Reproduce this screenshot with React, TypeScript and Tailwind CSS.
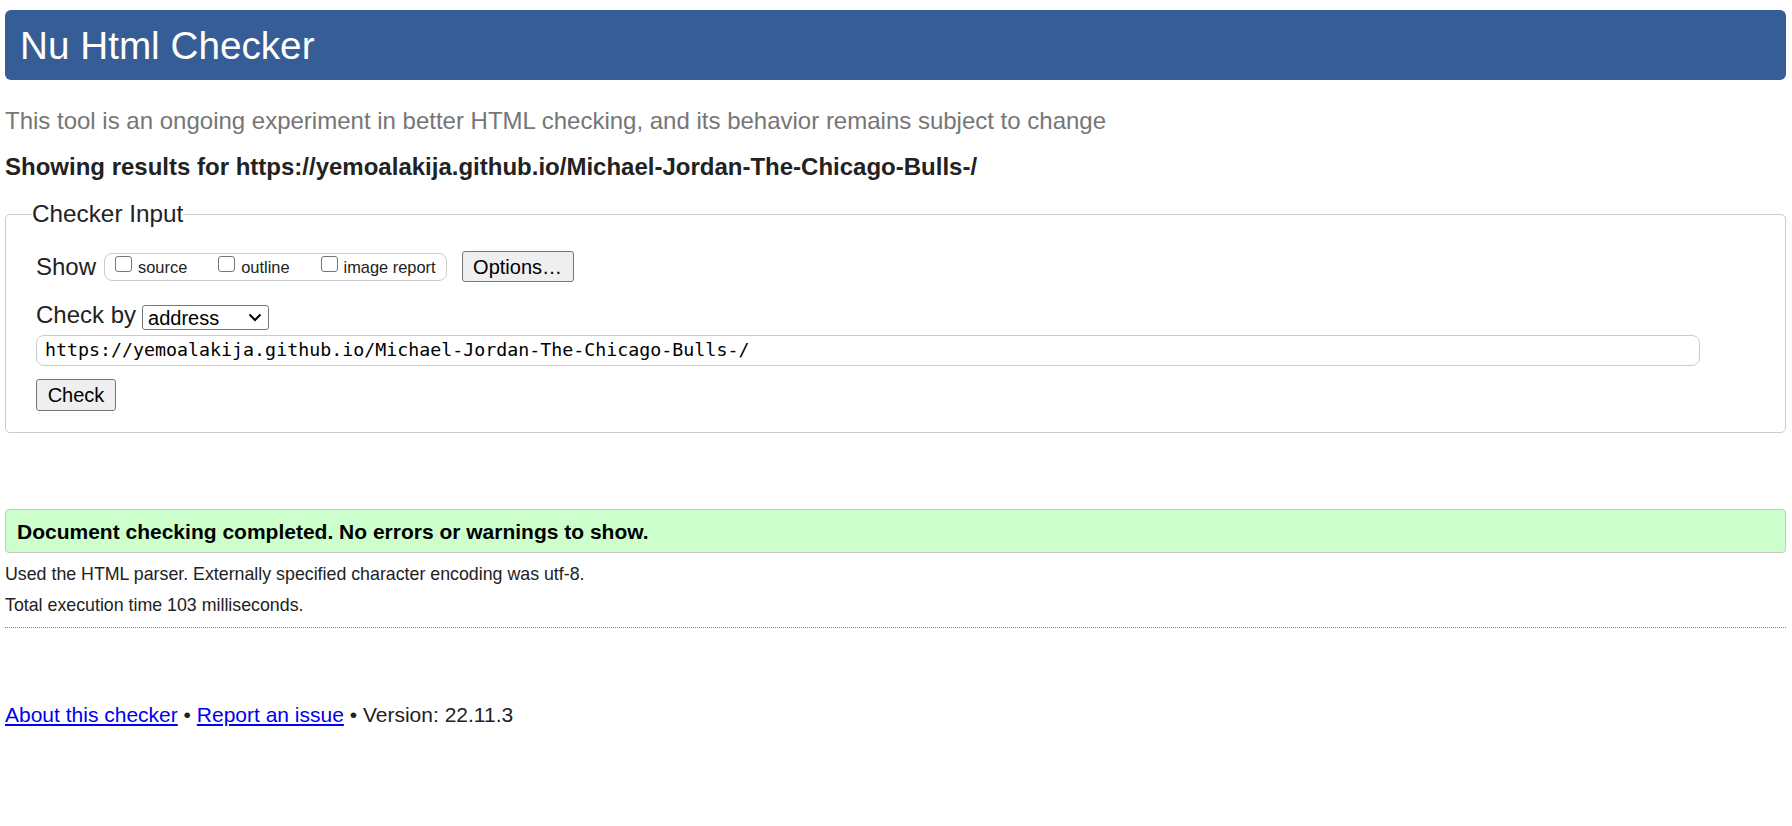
import React from 'react';

const url = 'https://yemoalakija.github.io/Michael-Jordan-The-Chicago-Bulls-/';

// one checkbox + its small label inside the "Show" group
const ShowOption = ({ id, label }: { id: string; label: string }) => (
  <label htmlFor={id} className="flex items-center">
    <input
      id={id}
      type="checkbox"
      className="mb-[5px] h-[16px] w-[17px] appearance-none rounded-[3px] border border-[#767676] bg-white"
    />
    <span className="ml-[6px] mt-[1px] text-[16.4px] leading-none">{label}</span>
  </label>
);

const App: React.FC = () => {
  return (
    <div className="min-h-screen bg-white pl-[5px] pr-[6px] pt-[10px] font-['Liberation_Sans',Arial,sans-serif] text-[#222]">
      <header className="flex h-[70px] items-center rounded-[6px] bg-[#365d95] pl-[15px] pt-[2px]">
        <h1 className="text-[38.7px] leading-none text-white">Nu Html Checker</h1>
      </header>

      <p className="mt-[27px] text-[24px] leading-[28px] text-[#767676]">
        This tool is an ongoing experiment in better HTML checking, and its behavior remains subject to change
      </p>
      <h2 className="mt-[18px] text-[24px] font-bold leading-[28px]">Showing results for {url}</h2>

      <fieldset className="mt-[19px] rounded-[5px] border border-[#ccc] pb-[21px] pl-[30px] pt-[23px]">
        <legend className="-ml-[4px] text-[24.3px] leading-[28px]">Checker Input</legend>

        {/* Show row */}
        <div className="flex h-[31px] items-center">
          <span className="text-[24px] leading-none">Show</span>
          <div className="ml-[8px] flex h-[28px] items-center gap-[31px] rounded-[8px] border border-[#ccc] pl-[10px] pr-[10px]">
            <ShowOption id="show-source" label="source" />
            <ShowOption id="show-outline" label="outline" />
            <ShowOption id="show-image" label="image report" />
          </div>
          <button
            type="button"
            className="ml-[15px] flex h-[31px] w-[112px] items-center justify-center rounded-[3px] border border-[#767676] bg-[#efefef] text-[20px] leading-none text-black"
          >
            Options…
          </button>
        </div>

        {/* Check by row */}
        <div className="mt-[19px] flex items-start">
          <span className="text-[24px] leading-[28px]">Check by</span>
          <div
            role="combobox"
            className="ml-[6px] mt-[4px] flex h-[25px] w-[127px] items-center justify-between rounded-[3px] border border-[#767676] bg-white pl-[5px] pr-[6px] text-[20px] leading-none text-black"
          >
            <span>address</span>
            <svg width="14" height="9" viewBox="0 0 14 9" fill="none">
              <path d="M1.5 1.5 L7 7 L12.5 1.5" stroke="#000" strokeWidth="2" />
            </svg>
          </div>
        </div>

        <div className="mt-[5px] flex h-[31px] w-[1664px] items-center rounded-[8px] border border-[#ccc] pl-[8px] font-['DejaVu_Sans_Mono',monospace] text-[18.3px] leading-none text-black">
          {url}
        </div>

        <button
          type="button"
          className="mt-[13px] flex h-[32px] w-[80px] items-center justify-center rounded-[3px] border border-[#767676] bg-[#efefef] text-[20px] leading-none text-black"
        >
          Check
        </button>
      </fieldset>

      <div className="mt-[76px] flex h-[44px] items-center rounded-[4px] border border-[#c6c6c6] bg-[#ccffcc] pl-[11px]">
        <p className="text-[21px] font-bold leading-none text-black">
          Document checking completed. No errors or warnings to show.
        </p>
      </div>

      <p className="mt-[11px] text-[17.8px] leading-[21px]">
        Used the HTML parser. Externally specified character encoding was utf-8.
      </p>
      <p className="mt-[10px] text-[17.8px] leading-[21px]">Total execution time 103 milliseconds.</p>
      <hr className="mt-[11px] h-0 border-t border-dotted border-[#888]" />

      <p className="mt-[75px] text-[21px] leading-[24px]">
        <a href="#about" className="text-[#0000ee] underline">
          About this checker
        </a>{' '}
        •{' '}
        <a href="#report" className="text-[#0000ee] underline">
          Report an issue
        </a>{' '}
        • Version: 22.11.3
      </p>
    </div>
  );
};

export default App;
